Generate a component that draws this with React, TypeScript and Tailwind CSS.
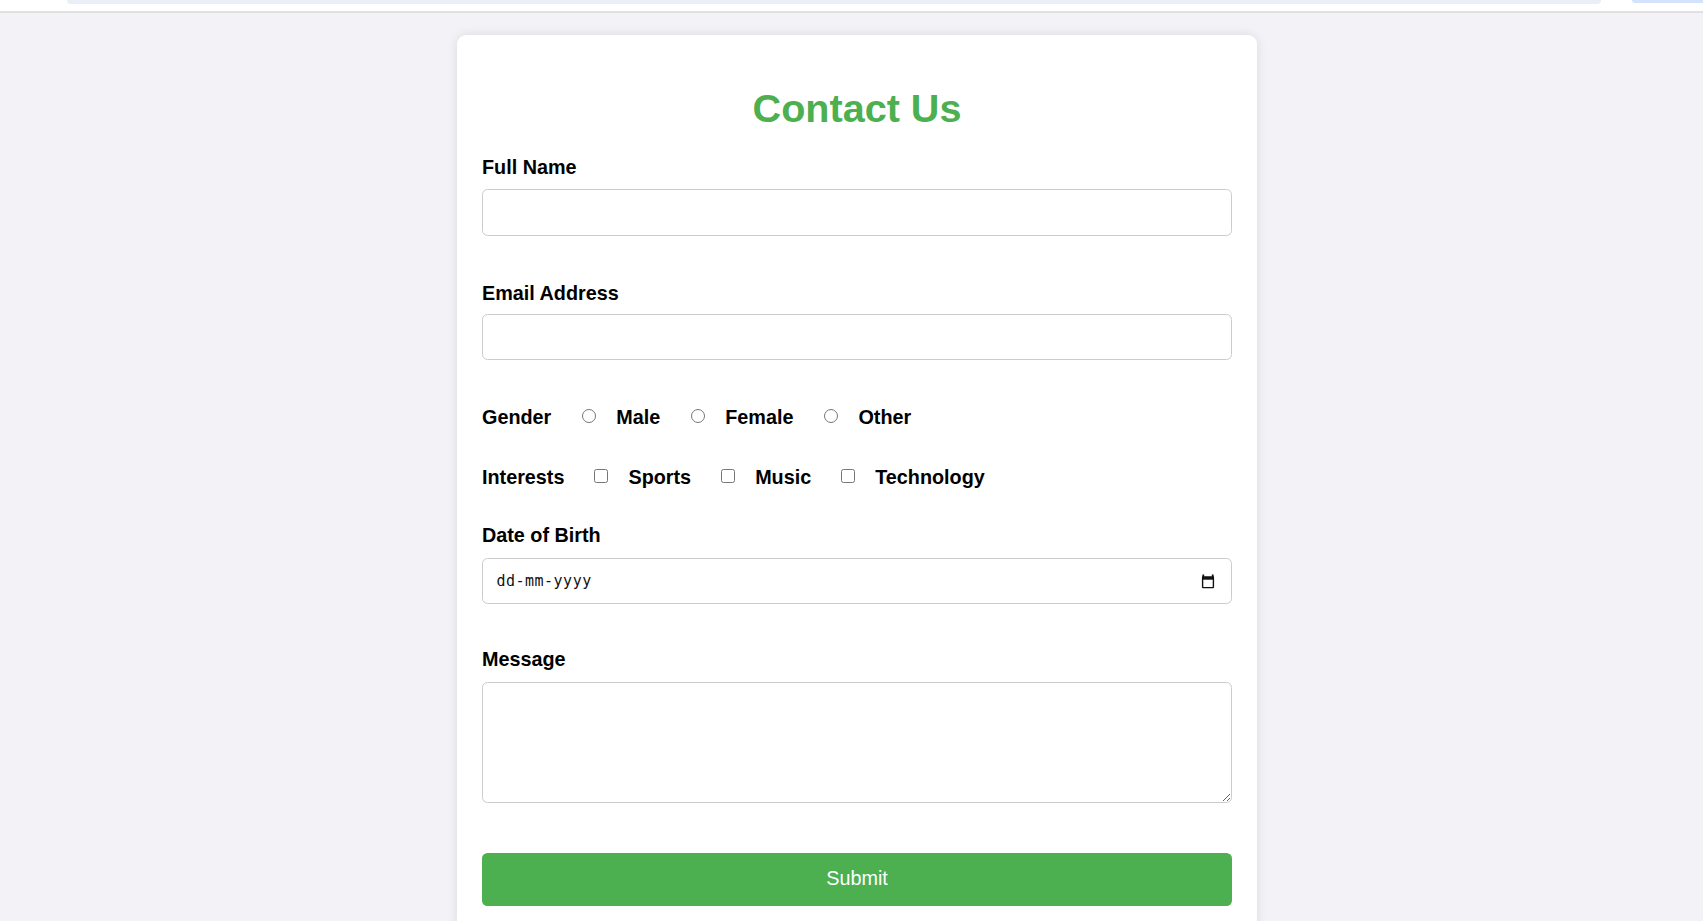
const font = { fontFamily: '"Liberation Sans", Arial, sans-serif' }

function Radio({ name }: { name: string }) {
  return <input type="radio" name={name} className="w-[14px] h-[14px] m-0 mb-[3.5px] ml-[31px] shrink-0" />
}

function Check() {
  return <input type="checkbox" className="w-[14px] h-[14px] m-0 mb-[3.5px] ml-[30px] shrink-0" />
}

function CalendarIcon() {
  return (
    <svg width="14" height="15" viewBox="0 0 14 15">
      <rect x="1.6" y="3.6" width="10.8" height="10.6" fill="none" stroke="#111" strokeWidth="1.4" rx="0.6" />
      <rect x="1" y="3" width="12" height="3.2" fill="#111" />
      <rect x="1.4" y="1" width="1.8" height="2.6" fill="#111" />
      <rect x="10.8" y="1" width="1.8" height="2.6" fill="#111" />
    </svg>
  )
}

export default function App() {
  const label = 'block text-[19.8px] leading-[23px] font-bold text-black'
  const field = 'block w-full border border-[#cccccc] rounded-[5.5px] bg-white outline-none'

  return (
    <div className="min-h-screen bg-[#f3f3f7]" style={font}>
      <div className="h-[13px] bg-white border-b-2 border-[#e0e0e0] flex items-start">
        <div className="ml-[67px] w-[1534px] h-[4px] rounded-b-[6px] bg-[#e9eef7]" />
        <div className="ml-[31px] flex-1 h-[3px] rounded-bl-[4px] bg-[#d3e3fd]" />
      </div>

      <div className="flex justify-center pt-[22px] pl-[11px]">
        <div className="w-[800px] bg-white rounded-[9px] shadow-[0_0_11px_rgba(0,0,0,0.1)] px-[25px] pt-[51px] pb-[25px]">
          <h1 className="text-center text-[39.6px] leading-[45px] font-bold text-[#4caf50]">Contact Us</h1>

          <label className={`${label} mt-[25px]`}>Full Name</label>
          <input type="text" className={`${field} mt-[10px] h-[46.5px]`} />

          <label className={`${label} mt-[46px]`}>Email Address</label>
          <input type="email" className={`${field} mt-[9px] h-[46px]`} />

          <div className="flex items-center h-[23px] mt-[46.5px] text-[19.8px] font-bold text-black">
            <span>Gender</span>
            <Radio name="gender" />
            <span className="ml-[20px]">Male</span>
            <Radio name="gender" />
            <span className="ml-[20px]">Female</span>
            <Radio name="gender" />
            <span className="ml-[20px]">Other</span>
          </div>

          <div className="flex items-center h-[23px] mt-[37px] text-[19.8px] font-bold text-black">
            <span>Interests</span>
            <Check />
            <span className="ml-[20px]">Sports</span>
            <Check />
            <span className="ml-[20px]">Music</span>
            <Check />
            <span className="ml-[20px]">Technology</span>
          </div>

          <label className={`${label} mt-[35px]`}>Date of Birth</label>
          <div className="relative mt-[10.5px]">
            <input
              type="text"
              placeholder="dd-mm-yyyy"
              className={`${field} h-[46.5px] pl-[13.4px] text-[15px] tracking-[0.5px] text-black placeholder:text-[#111]`}
              style={{ fontFamily: '"DejaVu Sans Mono", "Liberation Mono", monospace' }}
            />
            <div className="absolute right-[17px] top-1/2 -translate-y-1/2 flex">
              <CalendarIcon />
            </div>
          </div>

          <label className={`${label} mt-[44.3px]`}>Message</label>
          <textarea className={`${field} mt-[11px] h-[121px]`} />

          <button className="block w-full mt-[49.4px] h-[53px] rounded-[5.5px] bg-[#4caf50] text-white text-[19.8px]">
            Submit
          </button>
        </div>
      </div>
    </div>
  )
}
